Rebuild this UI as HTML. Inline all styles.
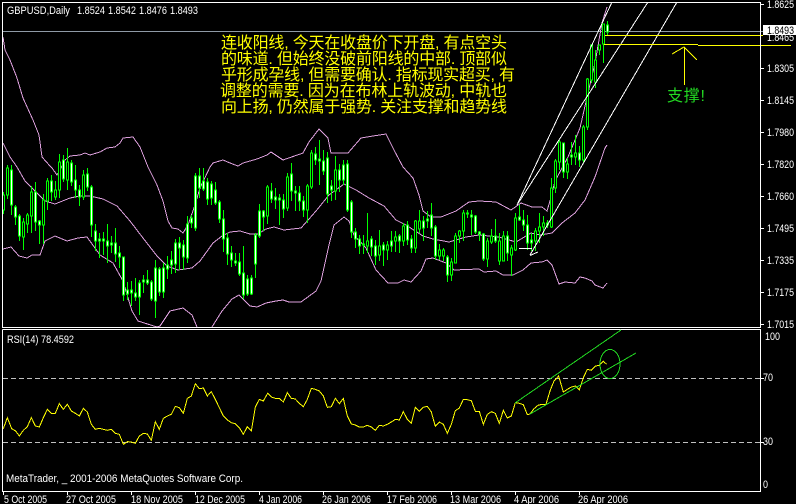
<!DOCTYPE html>
<html><head><meta charset="utf-8"><style>
html,body{margin:0;padding:0;background:#000;width:796px;height:504px;overflow:hidden}
svg{display:block}
.t{font-family:"Liberation Sans",sans-serif;font-size:11px;fill:#fff}
.c{font-family:"Liberation Sans","WenQuanYi Zen Hei","Noto Sans CJK SC",sans-serif;font-size:16px;fill:#ff0;white-space:pre}
</style></head><body>
<svg width="796" height="504" viewBox="0 0 796 504" xmlns="http://www.w3.org/2000/svg">
<defs><clipPath id="m"><rect x="3" y="3" width="757" height="324"/></clipPath></defs>
<g shape-rendering="crispEdges" fill="none">
<rect x="0" y="0" width="796" height="504" fill="#000"/>
<path stroke="#8f9aa6" d="M3 31.5H763"/>
<g clip-path="url(#m)" stroke="#dda0dd">
<path d="M3 37L5 50L10 60L17 78L23 98L33 120L39 135L42 157L50 166L52 168L57 175L60 170L65 160L70 156L80 155L85 153L90 155L100 152L107 148L115 147L120 143L123 138L133 137L140 147L148 167L157 185L163 201L168 221L172 228L178 229L183 233L188 225L195 205L200 188L210 167L213 163L223 160L230 163L238 166L243 163L257 159L267 155L271 152L283 160L303 153L309 142L319 129L328 138L331 153L348 153L361 138L373 136L386 134L394 150L403 167L413 178L419 195L423 211L431 217L441 217L456 211L469 202L479 201L496 202L511 210L521 203L532 207L542 207L547 211L550 201L555 181L568 157L580 128L588 93L595 63L602 23L607 7"/>
<path d="M3 143L10 157L17 167L25 181L35 191L45 201L55 204L70 198L80 196L90 196L103 199L117 206L130 221L143 238L157 256L167 266L178 270L192 268L200 261L213 243L222 236L230 232L240 231L250 234L258 234L266 229L274 227L284 230L301 228L316 211L329 195L344 184L356 190L369 198L384 206L396 220L406 225L423 236L433 239L449 242L466 237L479 235L499 237L516 242L531 233L540 235L552 233L562 223L575 213L585 200L595 177L605 148L607 145"/>
<path d="M3 249L11 247L19 256L27 258L32 255L40 255L45 241L55 236L67 241L78 238L87 237L100 255L113 263L123 281L132 311L138 321L157 327L160 326L170 311L183 308L192 315L197 327L197 330M212 330L212 327L222 311L232 299L239 295L250 306L257 307L266 303L276 301L283 300L289 302L301 302L316 291L321 281L329 245L334 225L344 217L349 221L354 235L366 248L376 270L388 283L398 283L404 280L411 282L421 271L426 259L433 258L446 263L454 270L479 269L484 272L496 271L503 275L513 275L523 270L531 263L542 262L547 260L552 265L559 284L565 282L575 283L580 277L585 278L592 281L595 285L603 288L607 283"/>
</g>
<path stroke="#0f0" d="M3.5 192V214M7.5 165V199M11.5 165V215M15.5 205V225M19.5 214V241M23.5 218V250M27.5 213V233M31.5 186V233M35.5 182V231M39.5 220V244M43.5 194V244M47.5 178V210M51.5 175V201M55.5 181V200M59.5 154V198M63.5 155V182M67.5 148V190M71.5 160V186M75.5 165V198M79.5 185V206M83.5 170V200M87.5 168V191M91.5 185V237M95.5 224V251M99.5 233V258M103.5 232V255M107.5 224V263M111.5 236V253M115.5 228V262M119.5 246V268M123.5 257V301M127.5 282V300M131.5 281V306M135.5 278V301M139.5 280V315M143.5 275V293M147.5 270V285M151.5 280V301M155.5 260V318M159.5 267V296M163.5 263V298M167.5 256V279M171.5 251V274M175.5 239V273M179.5 237V270M183.5 240V270M187.5 216V263M191.5 215V228M195.5 173V231M199.5 168V198M203.5 168V191M207.5 178V205M211.5 181V205M215.5 182V205M219.5 200V223M223.5 210V252M227.5 233V265M231.5 246V267M235.5 253V266M239.5 253V276M243.5 246V299M247.5 275V296M251.5 275V295M255.5 233V278M259.5 204V238M263.5 210V231"/>
<path stroke="#0f0" d="M267.5 185V224M271.5 183V203M275.5 188V209M279.5 194V225M283.5 194V218M287.5 173V211M291.5 163V201M295.5 186V211M299.5 186V211M303.5 196V217M307.5 184V223M311.5 150V189M315.5 147V165M319.5 140V185M323.5 150V175M327.5 152V203M331.5 180V201M335.5 156V200M339.5 164V192M343.5 160V185M347.5 160V212M351.5 200V238M355.5 228V248M359.5 235V254M363.5 235V254M367.5 213V253M371.5 236V256M375.5 240V265M379.5 230V261M383.5 242V266M387.5 241V260M391.5 231V252M395.5 231V252M399.5 234V253M403.5 223V246M407.5 221V245M411.5 235V253M415.5 220V253M419.5 210V233M423.5 216V241M427.5 211V228M431.5 203V236M435.5 225V260M439.5 244V260M443.5 248V261M447.5 255V282M451.5 258V281M455.5 233V263M459.5 230V243M463.5 210V241M467.5 210V218M471.5 210V235M475.5 215V234M479.5 231V241M483.5 233V261M487.5 238V267M491.5 229V244M495.5 219V243M499.5 233V265M503.5 231V261M507.5 231V261M511.5 245V276M515.5 213V251M519.5 205V221M523.5 210V231M527.5 215V250M531.5 233V251M535.5 228V251M539.5 213V243M543.5 216V236M547.5 220V228M551.5 178V228M555.5 159V193M559.5 140V170M563.5 143V178M567.5 158V179M571.5 142V165M575.5 135V165M579.5 146V167M583.5 125V163M587.5 78V130M591.5 45V83M595.5 50V88M599.5 45V55M603.5 24V63M607.5 21V35"/>
<path stroke="#0f0" fill="#000" d="M2.5 195h2v15h-2zM6.5 168h2v27h-2zM22.5 222h2v15h-2zM26.5 215h2v9h-2zM30.5 192h2v24h-2zM42.5 200h2v25h-2zM46.5 181h2v20h-2zM54.5 190h2v7h-2zM58.5 162h2v28h-2zM66.5 162h2v18h-2zM82.5 175h2v22h-2zM266.5 187h2v29h-2zM286.5 177h2v31h-2zM306.5 186h2v24h-2zM310.5 153h2v34h-2zM334.5 170h2v21h-2zM366.5 241h2v5h-2zM378.5 246h2v9h-2zM386.5 245h2v5h-2zM394.5 237h2v4h-2zM402.5 226h2v15h-2zM414.5 221h2v27h-2zM418.5 221h2v8h-2zM438.5 250h2v6h-2zM442.5 250h2v6h-2zM450.5 262h2v13h-2zM454.5 236h2v27h-2zM458.5 231h2v5h-2zM462.5 213h2v18h-2zM486.5 241h2v18h-2zM490.5 236h2v6h-2zM498.5 241h2v20h-2zM502.5 236h2v25h-2zM510.5 248h2v7h-2zM514.5 218h2v32h-2zM534.5 231h2v10h-2zM538.5 227h2v4h-2zM542.5 223h2v4h-2zM550.5 188h2v39h-2zM554.5 161h2v27h-2zM558.5 142h2v20h-2zM566.5 164h2v8h-2zM574.5 153h2v4h-2zM582.5 127h2v33h-2zM586.5 79h2v48h-2zM590.5 45h2v35h-2zM594.5 60h2v22h-2zM598.5 45h2v5h-2zM602.5 24h2v20h-2z"/>
<path stroke="#0f0" fill="#fff" d="M10.5 170h2v35h-2zM14.5 207h2v10h-2zM18.5 216h2v20h-2zM34.5 192h2v30h-2zM38.5 221h2v4h-2zM50.5 181h2v11h-2zM62.5 160h2v19h-2zM70.5 163h2v19h-2zM74.5 180h2v10h-2zM78.5 190h2v7h-2zM86.5 174h2v13h-2zM90.5 187h2v38h-2zM94.5 231h2v10h-2zM98.5 239h2v2h-2zM102.5 239h2v2h-2zM106.5 241h2v5h-2zM110.5 243h2v2h-2zM114.5 243h2v11h-2zM118.5 253h2v4h-2zM122.5 257h2v38h-2zM126.5 290h2v4h-2zM130.5 290h2v3h-2zM134.5 293h2v4h-2zM138.5 283h2v14h-2zM142.5 280h2v2h-2zM146.5 280h2v3h-2zM150.5 282h2v17h-2zM154.5 268h2v33h-2zM158.5 269h2v23h-2zM162.5 268h2v24h-2zM166.5 265h2v4h-2zM170.5 260h2v5h-2zM174.5 243h2v21h-2zM178.5 243h2v5h-2zM182.5 245h2v12h-2zM186.5 224h2v34h-2zM190.5 218h2v5h-2zM194.5 176h2v52h-2zM198.5 176h2v12h-2zM202.5 181h2v8h-2zM206.5 182h2v17h-2zM210.5 184h2v14h-2zM214.5 190h2v13h-2zM218.5 202h2v17h-2zM222.5 219h2v20h-2zM226.5 238h2v16h-2zM230.5 253h2v7h-2zM234.5 261h2v2h-2zM238.5 262h2v12h-2zM242.5 273h2v22h-2zM246.5 279h2v15h-2zM250.5 278h2v16h-2zM254.5 235h2v29h-2zM258.5 211h2v25h-2zM262.5 211h2v6h-2zM270.5 191h2v8h-2zM274.5 197h2v3h-2zM278.5 198h2v2h-2zM282.5 200h2v9h-2zM290.5 174h2v17h-2zM294.5 191h2v2h-2zM298.5 193h2v8h-2zM302.5 201h2v9h-2zM314.5 154h2v6h-2zM318.5 159h2v2h-2zM322.5 161h2v10h-2zM326.5 158h2v36h-2zM330.5 186h2v4h-2zM338.5 170h2v10h-2zM342.5 165h2v15h-2zM346.5 164h2v46h-2zM350.5 202h2v30h-2zM354.5 232h2v7h-2zM358.5 239h2v7h-2zM362.5 244h2v1h-2zM370.5 239h2v8h-2zM374.5 246h2v10h-2zM382.5 245h2v5h-2zM390.5 241h2v5h-2zM398.5 236h2v5h-2zM406.5 225h2v15h-2zM410.5 239h2v9h-2zM422.5 221h2v7h-2zM426.5 219h2v2h-2zM430.5 215h2v13h-2zM434.5 227h2v29h-2zM446.5 257h2v18h-2zM466.5 213h2v1h-2zM470.5 215h2v2h-2zM474.5 216h2v16h-2zM478.5 232h2v2h-2zM482.5 234h2v25h-2zM494.5 236h2v5h-2zM506.5 236h2v17h-2zM518.5 217h2v3h-2zM522.5 220h2v5h-2zM526.5 225h2v18h-2zM530.5 240h2v3h-2zM546.5 223h2v2h-2zM562.5 143h2v29h-2zM570.5 155h2v2h-2zM578.5 153h2v7h-2zM606.5 25h2v7h-2z"/>
<g clip-path="url(#m)" stroke="#fff">
<path d="M517 205L612 2M517 205L648 2M530 255L677 2M519 248.5H532M530 255.5L538 252"/>
</g>
<path stroke="#ff0" d="M605 35.500H763M604 44.500H698M698 45.500H791M684.500 47V85M672 54L684 47L697 60"/>
<path stroke="#fff" d="M2.500 2V327.500H760.500V2.500H2.500M2.500 329.500V491.500H760.500V329.500H2.500M760 4.500H764M760 68.500H764M760 100.500H764M760 132.500H764M760 164.500H764M760 196.500H764M760 228.500H764M760 260.500H764M760 292.500H764M760 324.500H764M760 378.500H764M760 442.500H764M3.500 491V495M67.500 491V495M131.500 491V495M195.500 491V495M259.500 491V495M323.500 491V495M387.500 491V495M451.500 491V495M515.500 491V495M579.500 491V495"/>
<path stroke="#c0c0c0" stroke-dasharray="5 3" d="M3 378.500H760M3 442.500H760"/>
<g transform="translate(0,336) scale(.33333)" stroke="#ff0" stroke-width="3">
<path d="M10 278L22 245L35 278L47 285L58 300L70 283L82 272L94 245L106 270L118 273L130 245L142 220L154 232L166 232L178 203L190 220L202 205L214 225L226 232L238 240L250 217L262 228L274 265L286 280L298 277L310 280L322 283L334 280L346 292L358 295L370 325L382 317L394 318L406 322L418 300L430 292L442 294L454 313L466 257L478 280L490 247L502 240L514 235L526 211L538 215L550 232L562 187L574 180L586 143L598 158L610 156L622 180L634 167L646 190L658 215L670 240L682 252L694 260L706 263L718 275L730 295L742 272L754 285L766 213L778 190L790 195L803 172L814 183L826 187L838 187L850 198L862 170L874 187L886 189L898 202L910 212L922 190L934 157L946 160L958 165L970 180L982 214L994 212L1006 187L1018 203L1030 187L1042 240L1054 264L1066 267L1078 273L1090 273L1102 268L1114 273L1126 283L1138 268L1150 270L1162 265L1174 258L1186 250L1198 252L1210 227L1222 250L1234 262L1246 214L1258 226L1270 214L1282 211L1294 228L1306 271L1318 258L1330 265L1342 292L1354 265L1366 224L1378 216L1390 190L1402 191L1414 194L1426 226L1438 226L1450 265L1462 235L1474 227L1486 232L1498 262L1510 223L1522 246L1534 240L1546 200L1558 202L1570 206L1582 236L1590 234L1602 218L1614 208L1626 205L1638 205L1650 165L1662 135L1676 120L1690 168L1702 160L1714 153L1726 150L1738 162L1750 125L1762 100L1774 103L1786 90L1798 88L1810 76L1820 85"/>
</g>
<path stroke="#22d822" d="M515 403L621 330M530 414L636 353"/>
<ellipse cx="610" cy="364" rx="10" ry="14.500" stroke="#22d822"/>
</g>
<g class="t">
<text class="t" x="7" y="14" textLength="63" lengthAdjust="spacingAndGlyphs">GBPUSD,Daily</text>
<text class="t" x="77" y="14" textLength="28" lengthAdjust="spacingAndGlyphs">1.8524</text>
<text class="t" x="108" y="14" textLength="28" lengthAdjust="spacingAndGlyphs">1.8542</text>
<text class="t" x="139" y="14" textLength="28" lengthAdjust="spacingAndGlyphs">1.8476</text>
<text class="t" x="170" y="14" textLength="28" lengthAdjust="spacingAndGlyphs">1.8493</text>
<text class="t" x="767" y="8" textLength="27" lengthAdjust="spacingAndGlyphs">1.8625</text>
<text class="t" x="767" y="41" textLength="27" lengthAdjust="spacingAndGlyphs">1.8465</text>
<text class="t" x="767" y="72" textLength="27" lengthAdjust="spacingAndGlyphs">1.8305</text>
<text class="t" x="767" y="104" textLength="27" lengthAdjust="spacingAndGlyphs">1.8145</text>
<text class="t" x="767" y="136" textLength="27" lengthAdjust="spacingAndGlyphs">1.7980</text>
<text class="t" x="767" y="168" textLength="27" lengthAdjust="spacingAndGlyphs">1.7820</text>
<text class="t" x="767" y="200" textLength="27" lengthAdjust="spacingAndGlyphs">1.7660</text>
<text class="t" x="767" y="232" textLength="27" lengthAdjust="spacingAndGlyphs">1.7495</text>
<text class="t" x="767" y="264" textLength="27" lengthAdjust="spacingAndGlyphs">1.7335</text>
<text class="t" x="767" y="296" textLength="27" lengthAdjust="spacingAndGlyphs">1.7175</text>
<text class="t" x="767" y="328" textLength="27" lengthAdjust="spacingAndGlyphs">1.7015</text>
<rect x="763" y="25" width="33" height="10" fill="#fff"/>
<text class="t" style="fill:#000" x="767" y="34" textLength="27" lengthAdjust="spacingAndGlyphs">1.8493</text>
<text class="t" x="7" y="343" textLength="67" lengthAdjust="spacingAndGlyphs">RSI(14) 78.4592</text>
<text class="t" x="765" y="340" textLength="15" lengthAdjust="spacingAndGlyphs">100</text>
<text class="t" x="763" y="381" textLength="10" lengthAdjust="spacingAndGlyphs">70</text>
<text class="t" x="763" y="445" textLength="10" lengthAdjust="spacingAndGlyphs">30</text>
<text class="t" x="763" y="488" textLength="5" lengthAdjust="spacingAndGlyphs">0</text>
<text class="t" x="6" y="482" textLength="237" lengthAdjust="spacingAndGlyphs">MetaTrader, _ 2001-2006 MetaQuotes Software Corp.</text>
<text class="t" x="4" y="503" textLength="43" lengthAdjust="spacingAndGlyphs">5 Oct 2005</text>
<text class="t" x="66" y="503" textLength="50" lengthAdjust="spacingAndGlyphs">27 Oct 2005</text>
<text class="t" x="131" y="503" textLength="52" lengthAdjust="spacingAndGlyphs">18 Nov 2005</text>
<text class="t" x="195" y="503" textLength="50" lengthAdjust="spacingAndGlyphs">12 Dec 2005</text>
<text class="t" x="259" y="503" textLength="43" lengthAdjust="spacingAndGlyphs">4 Jan 2006</text>
<text class="t" x="322" y="503" textLength="49" lengthAdjust="spacingAndGlyphs">26 Jan 2006</text>
<text class="t" x="387" y="503" textLength="50" lengthAdjust="spacingAndGlyphs">17 Feb 2006</text>
<text class="t" x="450" y="503" textLength="51" lengthAdjust="spacingAndGlyphs">13 Mar 2006</text>
<text class="t" x="514" y="503" textLength="45" lengthAdjust="spacingAndGlyphs">4 Apr 2006</text>
<text class="t" x="578" y="503" textLength="50" lengthAdjust="spacingAndGlyphs">26 Apr 2006</text>
</g>
<text class="c" xml:space="preserve" x="221" y="48" textLength="286">连收阳线, 今天在收盘价下开盘, 有点空头</text>
<text class="c" xml:space="preserve" x="221" y="64" textLength="286">的味道. 但始终没破前阳线的中部. 顶部似</text>
<text class="c" xml:space="preserve" x="221" y="80" textLength="294">乎形成孕线, 但需要确认. 指标现实超买, 有</text>
<text class="c" xml:space="preserve" x="220" y="96" textLength="287">调整的需要. 因为在布林上轨波动, 中轨也</text>
<text class="c" xml:space="preserve" x="221" y="112" textLength="286">向上扬, 仍然属于强势. 关注支撑和趋势线</text>
<text class="c" style="fill:#22d822" xml:space="preserve" x="667" y="101" textLength="38">支撑!</text>
</svg>
</body></html>
